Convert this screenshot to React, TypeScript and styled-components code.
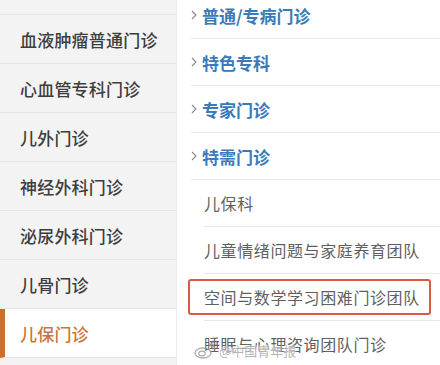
import React from 'react'
import styled, { createGlobalStyle } from 'styled-components'

const GlobalStyle = createGlobalStyle`
  html, body {
    margin: 0;
    padding: 0;
    background: #ffffff;
  }
  body {
    font-family: "Noto Sans CJK SC", "Noto Sans", sans-serif;
  }
`

const Page = styled.div`
  position: relative;
  display: flex;
  width: 440px;
  height: 365px;
  overflow: hidden;
  background: #ffffff;
`

const SideNav = styled.div`
  width: 176px;
  flex-shrink: 0;
  background: #f3f3f3;
  border-right: 1px solid #ececec;
`

const SideList = styled.ul`
  list-style: none;
  margin: 0;
  padding: 0;
`

const SideTop = styled.li`
  height: 14px;
  border-bottom: 1px solid #e6e6e6;
`

const SideItem = styled.li<{ $active?: boolean }>`
  display: flex;
  align-items: center;
  height: 48px;
  border-bottom: 1px solid #e6e6e6;
  background: ${({ $active }) => ($active ? '#ffffff' : 'transparent')};
  color: ${({ $active }) => ($active ? '#c8753a' : '#3d3d3d')};
  font-size: 17px;
  font-weight: 500;
  letter-spacing: 0.2px;
  border-left: ${({ $active }) => ($active ? '5px solid #c9702f' : 'none')};
  padding-left: ${({ $active }) => ($active ? '15px' : '20px')};
`

const Content = styled.div`
  flex: 1;
  padding-left: 14px;
`

const ContentList = styled.ul`
  list-style: none;
  margin: -8px 0 0;
  padding: 0;
`

const GroupRow = styled.li`
  display: flex;
  align-items: center;
  gap: 5px;
  height: 46px;
  border-bottom: 1px solid #e8e8e8;
  color: #3a7ab9;
  font-size: 17px;
  font-weight: 700;
`

const Chevron = styled.svg`
  width: 6px;
  height: 10px;
  flex-shrink: 0;
`

const SubRow = styled.li`
  position: relative;
  display: flex;
  align-items: center;
  height: 46px;
  margin-left: 13px;
  border-bottom: 1px solid #e8e8e8;
  color: #5f5f5f;
  font-size: 16px;
  letter-spacing: 0.6px;
`

const Highlight = styled.span`
  position: absolute;
  left: -16px;
  right: 9px;
  top: 5px;
  bottom: 5px;
  border: 2px solid #dc5843;
  border-radius: 3px;
  pointer-events: none;
`

const Watermark = styled.div`
  position: absolute;
  left: 194px;
  top: 341px;
  display: flex;
  align-items: center;
  gap: 3px;
  color: rgba(150, 150, 150, 0.7);
  font-size: 13px;
  text-shadow: 0 0 2px #fff, 0 0 2px #fff;
`

const sideItems = ['血液肿瘤普通门诊', '心血管专科门诊', '儿外门诊', '神经外科门诊', '泌尿外科门诊', '儿骨门诊', '儿保门诊']
const groups = ['普通/专病门诊', '特色专科', '专家门诊', '特需门诊']
const subs = ['儿保科', '儿童情绪问题与家庭养育团队', '空间与数学学习困难门诊团队', '睡眠与心理咨询团队门诊']

function ChevronIcon() {
  return (
    <Chevron viewBox="0 0 6 10">
      <path d="M1 1l4 4-4 4" fill="none" stroke="#8a8a8a" strokeWidth="1.1" />
    </Chevron>
  )
}

function WeiboLogo() {
  return (
    <svg width="22" height="16" viewBox="0 0 22 16">
      <ellipse cx="9" cy="10" rx="8" ry="5" fill="none" stroke="rgba(150,150,150,0.8)" strokeWidth="1.3" />
      <ellipse cx="8" cy="10.5" rx="3.2" ry="2.4" fill="none" stroke="rgba(150,150,150,0.8)" strokeWidth="1.1" />
      <path d="M15 2.5a4 4 0 0 1 4 4" fill="none" stroke="rgba(150,150,150,0.8)" strokeWidth="1.2" />
      <path d="M15 0.8a6 6 0 0 1 6 6" fill="none" stroke="rgba(150,150,150,0.8)" strokeWidth="1.2" />
    </svg>
  )
}

export default function App() {
  return (
    <>
      <GlobalStyle />
      <Page>
        <SideNav>
          <SideList>
            <SideTop />
            {sideItems.map((label, i) => (
              <SideItem key={label} $active={i === sideItems.length - 1}>
                {label}
              </SideItem>
            ))}
          </SideList>
        </SideNav>
        <Content>
          <ContentList>
            {groups.map((g) => (
              <GroupRow key={g}>
                <ChevronIcon />
                {g}
              </GroupRow>
            ))}
            {subs.map((s, i) => (
              <SubRow key={s}>
                {i === 2 && <Highlight />}
                {s}
              </SubRow>
            ))}
          </ContentList>
        </Content>
        <Watermark>
          <WeiboLogo />
          @中国青年报
        </Watermark>
      </Page>
    </>
  )
}
